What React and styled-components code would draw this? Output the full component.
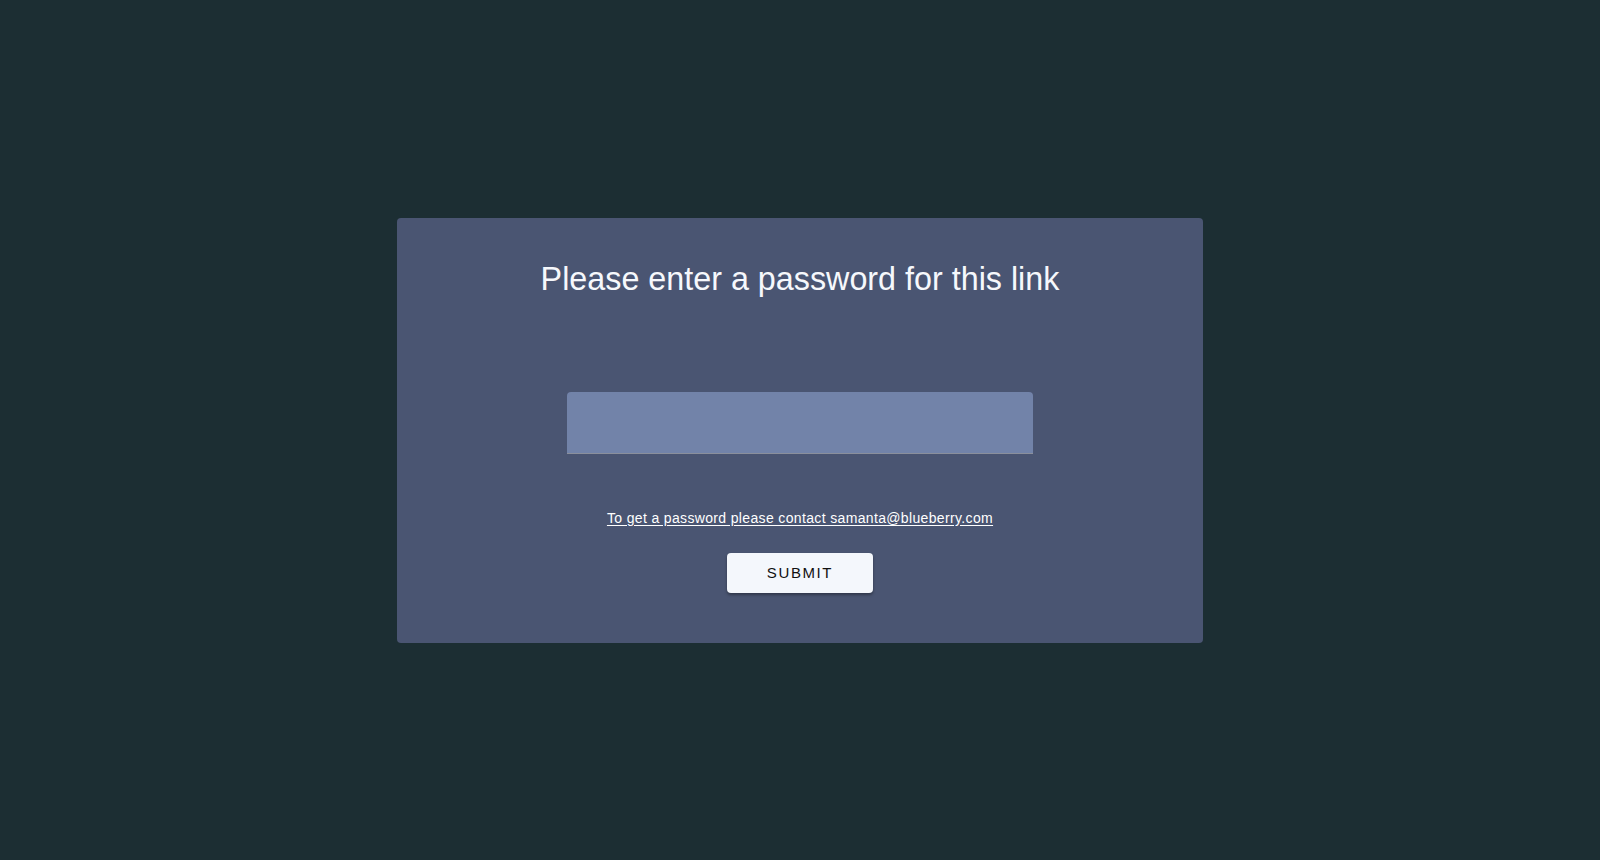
import React from "react"
import styled, { createGlobalStyle } from "styled-components"

const GlobalStyle = createGlobalStyle`
  html, body {
    margin: 0;
    padding: 0;
    background-color: #1c2e33;
  }
  * {
    box-sizing: border-box;
  }
`

const App = () => {
  return (
    <PageContainer>
      <GlobalStyle />
      <Card>
        <Title>Please enter a password for this link</Title>
        <PasswordInput type="password" aria-label="password" />
        <ContactLink href="mailto:samanta@blueberry.com">
          To get a password please contact samanta@blueberry.com
        </ContactLink>
        <SubmitButton type="button">Submit</SubmitButton>
      </Card>
    </PageContainer>
  )
}

const PageContainer = styled.div`
  width: 100vw;
  height: 100vh;
  display: flex;
  justify-content: center;
  align-items: center;
  background-color: #1c2e33;
  font-family: "Liberation Sans", Arial, sans-serif;
`

const Card = styled.div`
  width: 806px;
  height: 425px;
  display: flex;
  flex-direction: column;
  align-items: center;
  padding: 41px 0 49px;
  background-color: #4a5572;
  border-radius: 4px;
`

const Title = styled.h1`
  margin: 0;
  font-size: 32.3px;
  line-height: 40px;
  font-weight: normal;
  color: #f6f8fc;
`

const PasswordInput = styled.input`
  margin-top: 93px;
  width: 466px;
  height: 62px;
  padding: 0 16px;
  border: none;
  border-bottom: 1px solid #8a8f9c;
  border-radius: 4px 4px 0 0;
  background-color: #7283a9;
  color: #ffffff;
  font-size: 18px;
  outline: none;
`

const ContactLink = styled.a`
  margin-top: 54px;
  font-size: 14px;
  line-height: 20px;
  letter-spacing: 0.35px;
  color: #ffffff;
  text-decoration: underline;
  text-underline-offset: 2px;
`

const SubmitButton = styled.button`
  margin-top: 25px;
  width: 146px;
  height: 40px;
  border: none;
  border-radius: 4px;
  background-color: #f4f7fc;
  box-shadow: 0 2px 3px rgba(0, 0, 0, 0.35);
  font-family: "Liberation Sans", Arial, sans-serif;
  font-size: 15px;
  letter-spacing: 1.6px;
  text-transform: uppercase;
  color: #111111;
  cursor: pointer;
`

export default App
